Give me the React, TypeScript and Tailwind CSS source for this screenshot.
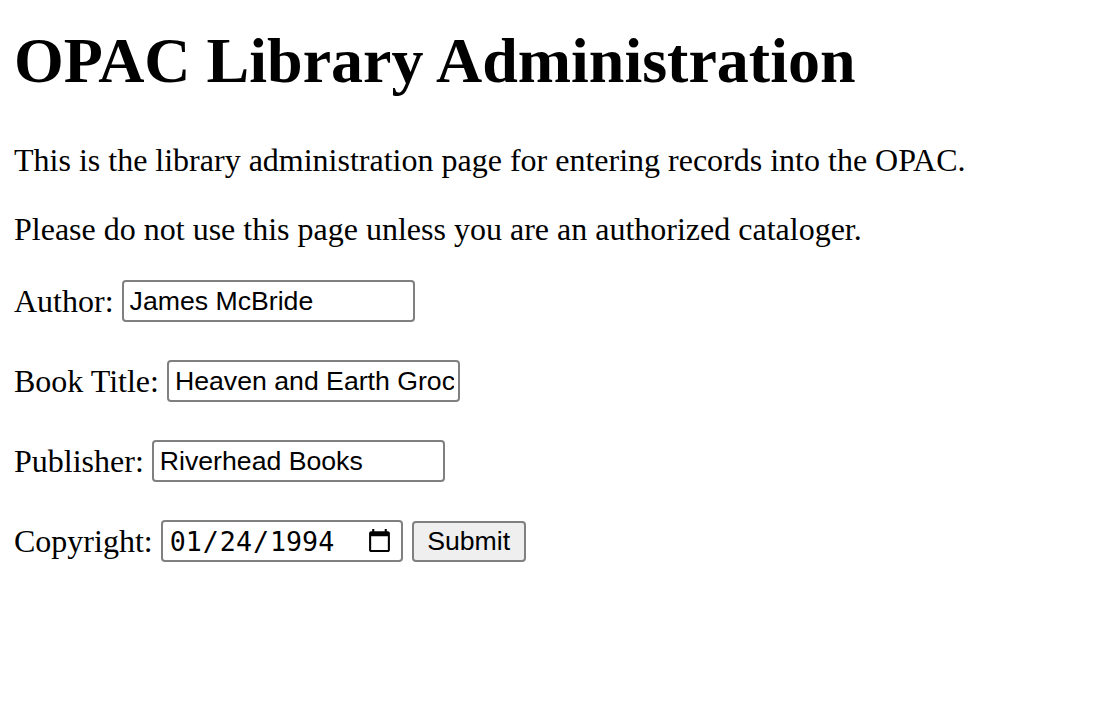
const fieldClass =
  "h-[42px] w-[293px] rounded-[4px] border-2 border-[#808080] bg-white pl-[6px] pr-[4px] font-['Liberation_Sans',sans-serif] text-[26.67px] outline-none";

export default function App() {
  return (
    <div className="min-h-screen bg-white px-[14px] font-['Liberation_Serif',serif] text-[32px] leading-[normal] text-black">
      <h1 className="pt-[24px] pb-[44px] text-[64px] font-bold leading-[normal]">
        OPAC Library Administration
      </h1>
      <p className="mb-[32px]">
        This is the library administration page for entering records into the OPAC.
      </p>
      <p className="mb-[32px]">
        Please do not use this page unless you are an authorized cataloger.
      </p>
      <form className="flex flex-col gap-[38px]" onSubmit={(e) => e.preventDefault()}>
        <div className="flex items-center gap-[8px]">
          <label htmlFor="author">Author:</label>
          <input id="author" type="text" defaultValue="James McBride" className={fieldClass} />
        </div>
        <div className="flex items-center gap-[8px]">
          <label htmlFor="title">Book Title:</label>
          <input
            id="title"
            type="text"
            defaultValue="Heaven and Earth Grocery Store"
            className={fieldClass}
          />
        </div>
        <div className="flex items-center gap-[8px]">
          <label htmlFor="publisher">Publisher:</label>
          <input id="publisher" type="text" defaultValue="Riverhead Books" className={fieldClass} />
        </div>
        <div className="flex items-center gap-[8px]">
          <label htmlFor="copyright">Copyright:</label>
          <input
            id="copyright"
            type="date"
            defaultValue="1994-01-24"
            className="h-[42px] w-[242px] rounded-[4px] border-2 border-[#808080] bg-white px-[6px] font-['DejaVu_Sans_Mono',monospace] text-[26.67px] outline-none"
          />
          <button
            type="submit"
            className="ml-[1px] h-[41px] w-[114px] rounded-[4px] border-2 border-[#808080] bg-[#efefef] font-['Liberation_Sans',sans-serif] text-[26.67px]"
          >
            Submit
          </button>
        </div>
      </form>
    </div>
  );
}
